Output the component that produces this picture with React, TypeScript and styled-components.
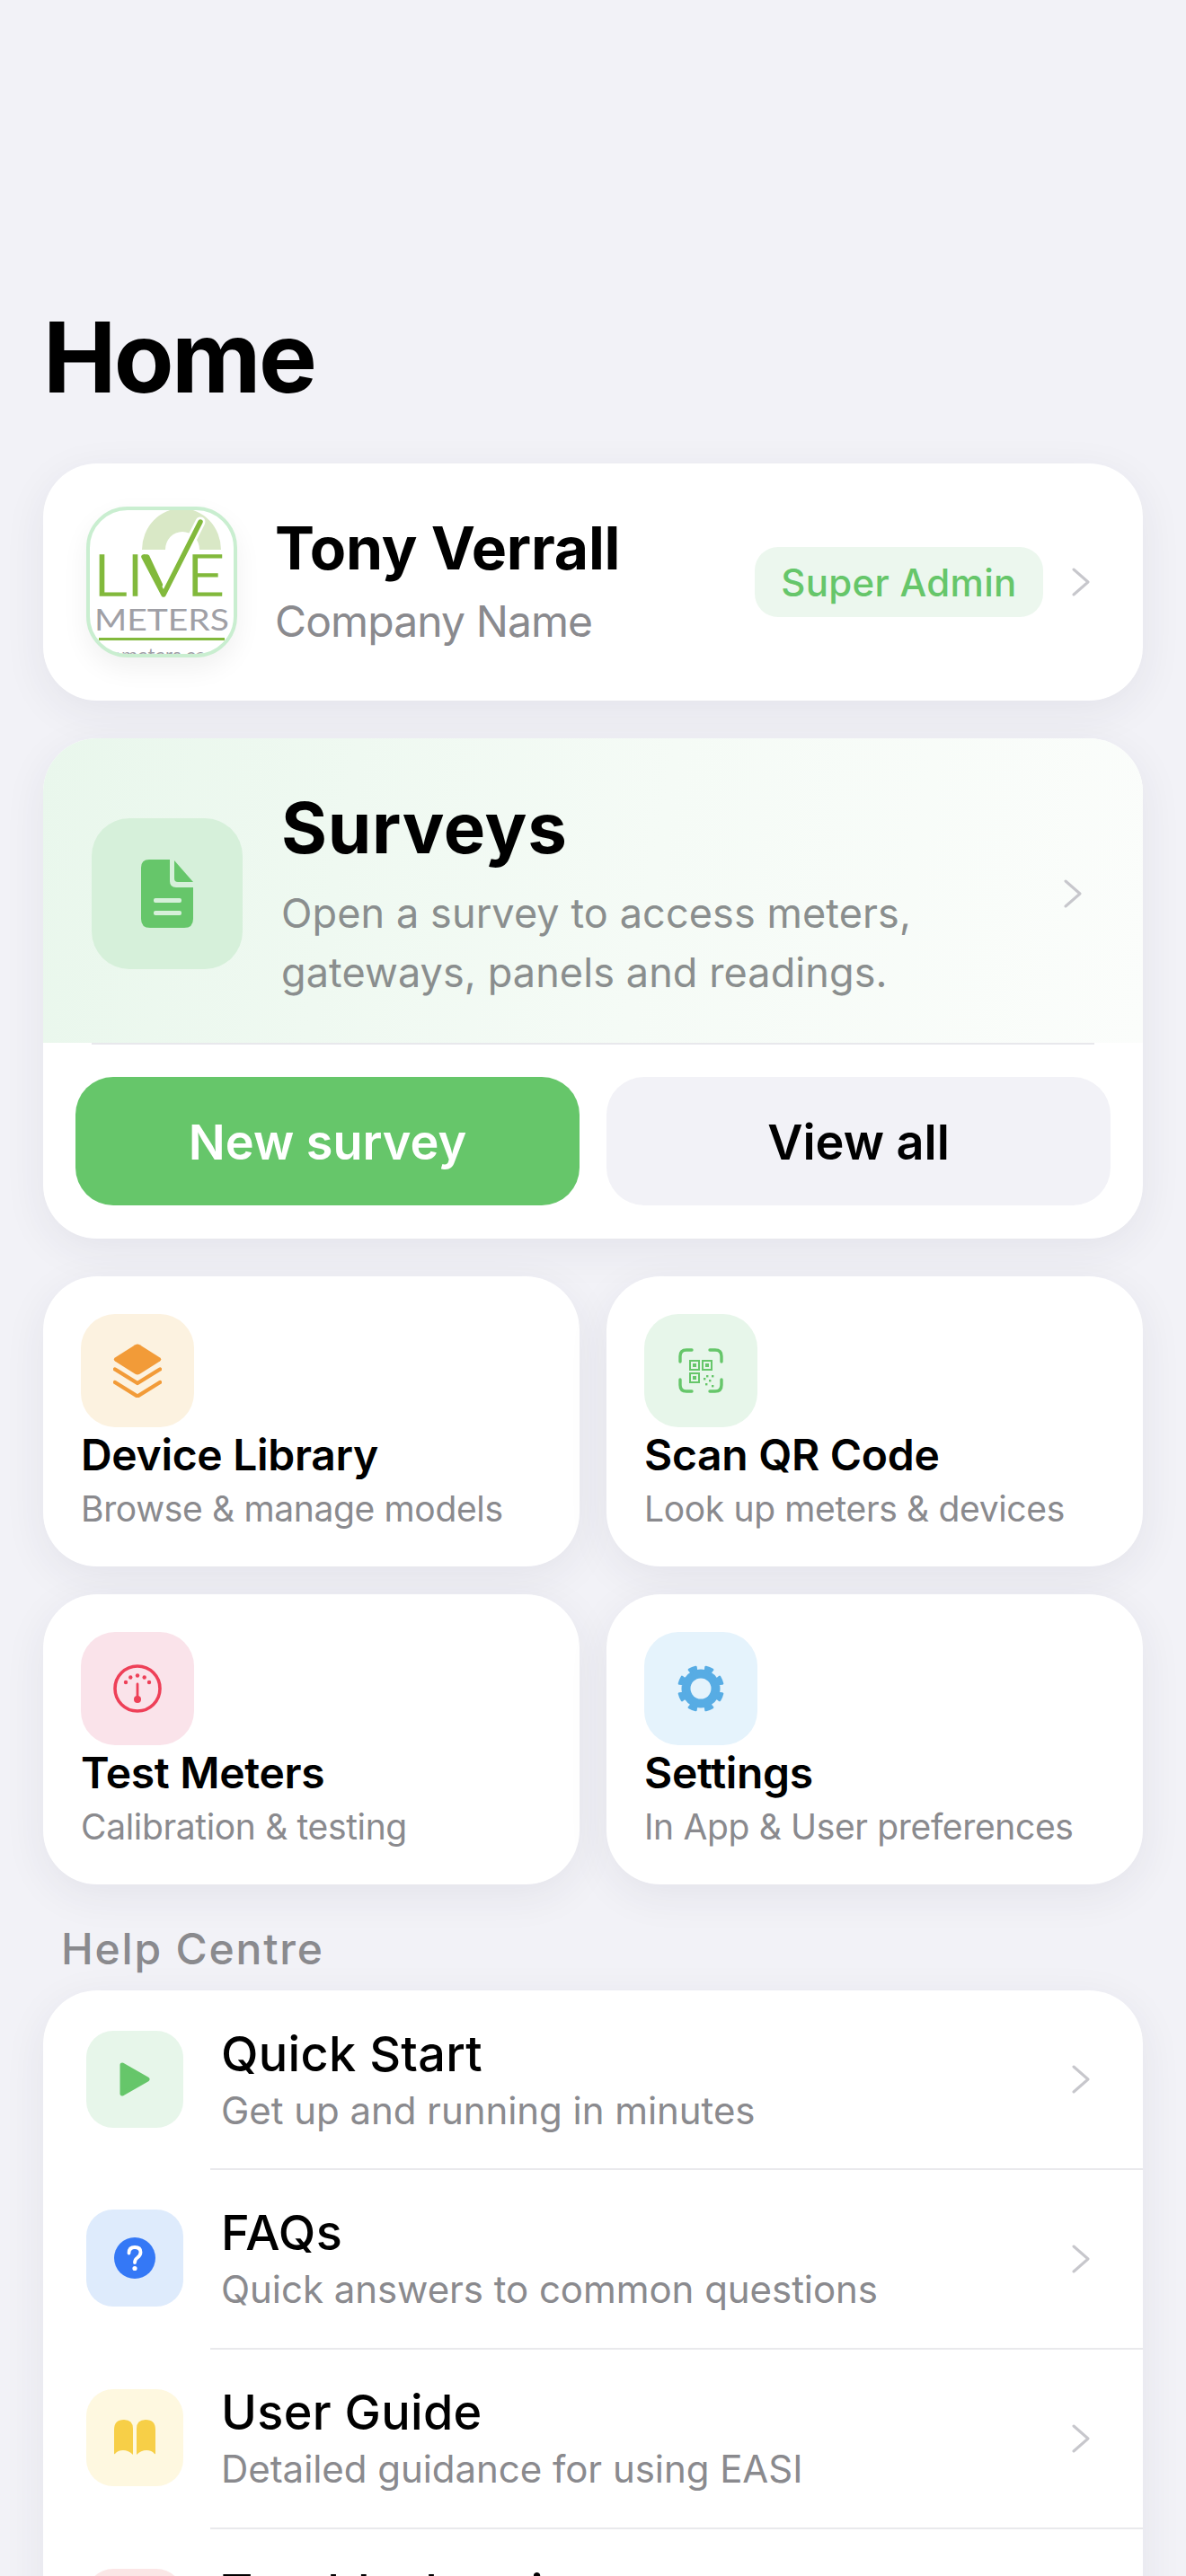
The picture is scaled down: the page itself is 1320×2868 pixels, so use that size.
import React from "react";
import styled, { createGlobalStyle } from "styled-components";

const GlobalStyle = createGlobalStyle`
  html, body {
    margin: 0;
    height: 2868px;
    overflow: hidden;
    background: #f2f2f7;
    font-family: Inter, "Noto Sans", "Liberation Sans", sans-serif;
    -webkit-font-smoothing: antialiased;
  }
`;

const GREEN = "#66c66a";
const CARD_SHADOW = "0 12px 48px rgba(40, 40, 70, 0.07)";

const Screen = styled.main`
  height: 2868px;
  overflow: hidden;
  box-sizing: border-box;
  padding: 338px 48px 0;
  display: flex;
  flex-direction: column;
`;

const PageTitle = styled.h1`
  margin: 0 0 60px;
  font-size: 109px;
  line-height: 118px;
  font-weight: 700;
  letter-spacing: -2.6px;
  color: #000;
`;

const Card = styled.section`
  background: #fff;
  border-radius: 60px;
  box-shadow: ${CARD_SHADOW};
  overflow: hidden;
  flex-shrink: 0;
`;

const ProfileCard = styled(Card)`
  height: 264px;
  margin-bottom: 42px;
  padding: 0 59px 0 48px;
  display: flex;
  align-items: center;
`;

const LogoFrame = styled.div`
  width: 168px;
  height: 168px;
  flex-shrink: 0;
  margin-right: 42px;
  box-sizing: border-box;
  border: 4px solid #c9eed0;
  border-radius: 46px;
  overflow: hidden;
  background: #fff;
  box-shadow: 0 12px 30px rgba(0, 0, 0, 0.06);
  svg { display: block; margin: -4px; }
`;

const ProfileText = styled.div`
  flex: 1;
  min-width: 0;
`;

const ProfileName = styled.div`
  font-size: 66px;
  line-height: 80px;
  font-weight: 700;
  letter-spacing: -0.2px;
  color: #000;
  margin: -5px 0 13px;
`;

const ProfileCompany = styled.div`
  font-size: 48px;
  line-height: 58px;
  letter-spacing: -0.9px;
  color: #8a8a8e;
`;

const RoleBadge = styled.span`
  width: 321px;
  height: 78px;
  margin-right: 32px;
  flex-shrink: 0;
  display: flex;
  align-items: center;
  justify-content: center;
  border-radius: 26px;
  background: #ecf7ee;
  color: ${GREEN};
  font-size: 42px;
  font-weight: 500;
  letter-spacing: 0.3px;
`;

const Chevron = styled.svg`
  width: 20px;
  height: 32px;
  flex-shrink: 0;
  fill: none;
  stroke: #c7c7cc;
  stroke-width: 3;
  stroke-linecap: round;
  stroke-linejoin: round;
`;

const SurveyCard = styled(Card)`
  height: 557px;
  margin-bottom: 42px;
`;

const SurveyHeader = styled.div`
  height: 339px;
  box-sizing: border-box;
  padding: 6px 68px 0 54px;
  display: flex;
  align-items: center;
  background: linear-gradient(100deg, #e9f7ec 0%, #f5fbf6 55%, #fbfdfb 100%);
`;

const SurveyIconBox = styled.div`
  width: 168px;
  height: 168px;
  margin-right: 43px;
  flex-shrink: 0;
  display: flex;
  align-items: center;
  justify-content: center;
  border-radius: 42px;
  background: #d6f0da;
`;

const SurveyText = styled.div`
  flex: 1;
  padding-top: 2px;
`;

const SurveyTitle = styled.div`
  font-size: 78px;
  line-height: 94px;
  font-weight: 700;
  letter-spacing: 0.7px;
  color: #000;
  margin-bottom: 15px;
`;

const SurveySub = styled.div`
  font-size: 45px;
  line-height: 66px;
  letter-spacing: 0.1px;
  color: #8a8e8e;
`;

const SurveyRule = styled.div`
  height: 2px;
  margin: 0 54px;
  background: #e8e8ec;
`;

const SurveyActions = styled.div`
  padding: 36px 36px 0;
  display: grid;
  grid-template-columns: 1fr 1fr;
  gap: 30px;
`;

const ActionButton = styled.button<{ $primary?: boolean }>`
  height: 143px;
  border: 0;
  border-radius: 42px;
  padding-top: 2px;
  font-family: inherit;
  font-size: 54px;
  font-weight: 600;
  letter-spacing: 0;
  background: ${(p) => (p.$primary ? GREEN : "#f2f2f7")};
  color: ${(p) => (p.$primary ? "#fff" : "#000")};
`;

const TileGrid = styled.div`
  display: grid;
  grid-template-columns: 597px 597px;
  column-gap: 30px;
  row-gap: 31px;
  flex-shrink: 0;
`;

const Tile = styled(Card)`
  height: 323px;
  box-sizing: border-box;
  padding: 42px 42px 0;
`;

const IconBox = styled.div<{ $tint: string; $size: number; $radius: number }>`
  width: ${(p) => p.$size}px;
  height: ${(p) => p.$size}px;
  flex-shrink: 0;
  display: flex;
  align-items: center;
  justify-content: center;
  border-radius: ${(p) => p.$radius}px;
  background: ${(p) => p.$tint};
`;

const TileTitle = styled.div`
  margin-top: 2px;
  font-size: 48px;
  line-height: 58px;
  font-weight: 600;
  letter-spacing: -0.3px;
  color: #000;
`;

const TileSub = styled.div`
  margin-top: 7px;
  font-size: 39px;
  line-height: 48px;
  letter-spacing: -0.35px;
  color: #8a8a8e;
`;

const SectionLabel = styled.h2`
  margin: 43px 0 17px;
  padding-left: 20px;
  font-size: 48px;
  line-height: 58px;
  font-weight: 500;
  letter-spacing: 1.8px;
  color: #8a8a8e;
`;

const HelpCard = styled(Card)`
  flex-shrink: 0;
`;

const HelpRow = styled.div`
  position: relative;
  height: 198px;
  box-sizing: border-box;
  padding: 45px 59px 0 48px;
  display: flex;
  align-items: flex-start;
  & + & { border-top: 2px solid #e9e9ec; height: 200px; padding-top: 44px; }
  & + &::before { content: ""; position: absolute; left: 0; top: -2px; width: 186px; height: 2px; background: #fff; }
`;

const HelpText = styled.div`
  flex: 1;
  margin-left: 42px;
  margin-top: -6px;
`;

const HelpTitle = styled.div`
  font-size: 54px;
  line-height: 64px;
  font-weight: 500;
  letter-spacing: 0.3px;
  color: #000;
`;

const HelpSub = styled.div`
  margin-top: 6px;
  font-size: 42px;
  line-height: 50px;
  letter-spacing: -0.05px;
  color: #8a8a8e;
`;

const RowChevron = styled(Chevron)`
  align-self: center;
  margin-top: -45px;
`;

function ChevronIcon({ as: Comp = Chevron }: { as?: typeof Chevron }) {
  return (
    <Comp viewBox="0 0 20 32">
      <path d="M2 2 L18 16 L2 30" />
    </Comp>
  );
}

function LiveMetersLogo() {
  return (
    <svg width="168" height="168" viewBox="0 0 168 168">
      <path d="M62 48 A44 46 0 0 1 150 48 H126 A19 20 0 0 0 88 48 Z" fill="#d9e8c6" />
      <text x="8" y="99" fontFamily="Lato, sans-serif" fontWeight="300" fontSize="63" textLength="146" lengthAdjust="spacingAndGlyphs" fill="#82b93c" stroke="#82b93c" strokeWidth="1.6">LIVE</text>
      <path d="M86 98 L127 17" fill="none" stroke="#fff" strokeWidth="11" strokeLinecap="round" />
      <path d="M64 56 L86 98 L127 17" fill="none" stroke="#82b93c" strokeWidth="5.5" strokeLinecap="round" strokeLinejoin="round" />
      <text x="9" y="138" fontFamily="Lato, sans-serif" fontWeight="400" fontSize="33" textLength="150" lengthAdjust="spacingAndGlyphs" fill="#a0a0a6">METERS</text>
      <rect x="14" y="146" width="140" height="3" fill="#82b93c" />
      <text x="84" y="173" textAnchor="middle" fontFamily="Lato, sans-serif" fontSize="22" fill="#a0a0a6">livemeters.co.uk</text>
    </svg>
  );
}

function DocIcon() {
  return (
    <svg width="58" height="76" viewBox="0 0 58 76">
      <path d="M9 0 H32 V24 Q32 31 39 31 H58 V66 Q58 76 48 76 H10 Q0 76 0 66 V9 Q0 0 9 0 Z" fill={GREEN} />
      <path d="M37 1 L58 25 H41 Q37 25 37 21 Z" fill={GREEN} />
      <rect x="14" y="43" width="31" height="5" rx="2" fill="#d6f0da" />
      <rect x="14" y="57" width="31" height="5" rx="2" fill="#d6f0da" />
    </svg>
  );
}

function LayersIcon() {
  return (
    <svg width="54" height="60" viewBox="0 0 54 60">
      <path d="M24.5 1.2 Q27 -0.2 29.5 1.2 L52 15.5 Q54.5 17.5 52 19.5 L29.5 33.8 Q27 35.2 24.5 33.8 L2 19.5 Q-0.5 17.5 2 15.5 Z" fill="#f29b38" />
      <path d="M2 34.500 L27 50 L52 34.500" transform="translate(0 -6)" fill="none" stroke="#f29b38" strokeWidth="4.4" strokeLinecap="round" strokeLinejoin="round" />
      <path d="M2 49 L27 64.500 L52 49" transform="translate(0 -6)" fill="none" stroke="#f29b38" strokeWidth="4.4" strokeLinecap="round" strokeLinejoin="round" />
    </svg>
  );
}

function QrIcon() {
  const finder = (x: number, y: number) => (
    <g key={`${x}-${y}`}>
      <rect x={x + 1} y={y + 1} width="10" height="10" fill="none" stroke={GREEN} strokeWidth="2" />
      <rect x={x + 4} y={y + 4} width="4" height="4" fill={GREEN} />
    </g>
  );
  const dots = [[31, 30], [37, 30], [28, 33], [34, 35], [30, 39], [37, 41]];
  return (
    <svg width="50" height="50" viewBox="0 0 50 50">
      <path d="M2 15 V9 Q2 2 9 2 H15 M35 2 H41 Q48 2 48 9 V15 M48 35 V41 Q48 48 41 48 H35 M15 48 H9 Q2 48 2 41 V35" fill="none" stroke={GREEN} strokeWidth="3.4" strokeLinecap="round" />
      {finder(12, 13)}
      {finder(26, 13)}
      {finder(12, 27)}
      {dots.map(([x, y]) => (
        <rect key={`${x}-${y}`} x={x} y={y} width="2.400" height="2.400" fill={GREEN} />
      ))}
    </svg>
  );
}

function GaugeIcon() {
  const red = "#ee4058";
  return (
    <svg width="54" height="54" viewBox="0 0 54 54">
      <circle cx="27" cy="27" r="25" fill="none" stroke={red} strokeWidth="3.6" />
      <circle cx="14" cy="20" r="2.200" fill={red} />
      <circle cx="19.300" cy="14.500" r="2.200" fill={red} />
      <circle cx="27" cy="12.500" r="2.200" fill={red} />
      <circle cx="34.700" cy="14.500" r="2.200" fill={red} />
      <circle cx="40" cy="20" r="2.200" fill={red} />
      <path d="M27 22 V38" stroke={red} strokeWidth="2.800" strokeLinecap="round" />
      <circle cx="27" cy="39" r="4" fill={red} />
    </svg>
  );
}

function gearPath(cx: number, cy: number, outer: number, inner: number, teeth: number) {
  const step = (Math.PI * 2) / teeth;
  const pt = (r: number, a: number) => `${(cx + r * Math.cos(a)).toFixed(2)} ${(cy + r * Math.sin(a)).toFixed(2)}`;
  let d = "";
  for (let i = 0; i < teeth; i++) {
    const a = i * step - step / 2;
    d += `${i === 0 ? "M" : "L"}${pt(inner, a - step * 0.16)} `;
    d += `L${pt(outer, a - step * 0.2)} A${outer} ${outer} 0 0 1 ${pt(outer, a + step * 0.2)} `;
    d += `L${pt(inner, a + step * 0.16)} `;
    d += `A${inner} ${inner} 0 0 1 ${pt(inner, a + step - step * 0.16)} `;
  }
  return d + "Z";
}

function GearIcon() {
  const blue = "#57ace4";
  return (
    <svg width="54" height="54" viewBox="0 0 54 54">
      <path d={gearPath(27, 27, 24.500, 20, 8)} fill={blue} stroke={blue} strokeWidth="3" strokeLinejoin="round" />
      <circle cx="27" cy="27" r="11.500" fill="#e5f3fc" />
    </svg>
  );
}

function PlayIcon() {
  return (
    <svg width="34" height="38" viewBox="0 0 34 38">
      <path d="M3 3 L31 19 L3 35 Z" fill={GREEN} stroke={GREEN} strokeWidth="5" strokeLinejoin="round" />
    </svg>
  );
}

function QuestionIcon() {
  return (
    <svg width="46" height="46" viewBox="0 0 46 46">
      <circle cx="23" cy="23" r="23" fill="#3478f6" />
      <path d="M16.500 17.500 Q16.500 11 23 11 Q29.500 11 29.500 16.500 Q29.500 20 26 22.500 Q23 24.500 23 28" fill="none" stroke="#fff" strokeWidth="3.800" strokeLinecap="round" />
      <circle cx="23" cy="34.500" r="2.600" fill="#fff" />
    </svg>
  );
}

function BookIcon() {
  const yellow = "#f7cf47";
  return (
    <svg width="46" height="40" viewBox="0 0 46 40">
      <path d="M0 11 Q0 0 11 0 Q21 0 21 10 V39 Q16 34 10 34 Q4 34 1 38 Q0 39 0 37 Z" fill={yellow} />
      <path d="M46 11 Q46 0 35 0 Q25 0 25 10 V39 Q30 34 36 34 Q42 34 45 38 Q46 39 46 37 Z" fill={yellow} />
    </svg>
  );
}

const tiles = [
  { title: "Device Library", sub: "Browse & manage models", tint: "#fcf2e0", icon: <LayersIcon /> },
  { title: "Scan QR Code", sub: "Look up meters & devices", tint: "#e7f6ea", icon: <QrIcon /> },
  { title: "Test Meters", sub: "Calibration & testing", tint: "#fae3ea", icon: <GaugeIcon /> },
  { title: "Settings", sub: "In App & User preferences", tint: "#e5f3fc", icon: <GearIcon /> },
];

const helpRows = [
  { title: "Quick Start", sub: "Get up and running in minutes", tint: "#e7f6ea", icon: <PlayIcon /> },
  { title: "FAQs", sub: "Quick answers to common questions", tint: "#deebfc", icon: <QuestionIcon /> },
  { title: "User Guide", sub: "Detailed guidance for using EASI", tint: "#fef8e0", icon: <BookIcon /> },
  { title: "Troubleshooting", tint: "#fbe6e6", icon: null },
];

export default function App() {
  return (
    <>
      <GlobalStyle />
      <Screen>
        <PageTitle>Home</PageTitle>

        <ProfileCard>
          <LogoFrame>
            <LiveMetersLogo />
          </LogoFrame>
          <ProfileText>
            <ProfileName>Tony Verrall</ProfileName>
            <ProfileCompany>Company Name</ProfileCompany>
          </ProfileText>
          <RoleBadge>Super Admin</RoleBadge>
          <ChevronIcon />
        </ProfileCard>

        <SurveyCard>
          <SurveyHeader>
            <SurveyIconBox>
              <DocIcon />
            </SurveyIconBox>
            <SurveyText>
              <SurveyTitle>Surveys</SurveyTitle>
              <SurveySub>
                Open a survey to access meters,
                <br />
                gateways, panels and readings.
              </SurveySub>
            </SurveyText>
            <ChevronIcon />
          </SurveyHeader>
          <SurveyRule />
          <SurveyActions>
            <ActionButton $primary>New survey</ActionButton>
            <ActionButton>View all</ActionButton>
          </SurveyActions>
        </SurveyCard>

        <TileGrid>
          {tiles.map((t) => (
            <Tile key={t.title}>
              <IconBox $tint={t.tint} $size={126} $radius={38}>
                {t.icon}
              </IconBox>
              <TileTitle>{t.title}</TileTitle>
              <TileSub>{t.sub}</TileSub>
            </Tile>
          ))}
        </TileGrid>

        <SectionLabel>Help Centre</SectionLabel>

        <HelpCard>
          {helpRows.map((r) => (
            <HelpRow key={r.title}>
              <IconBox $tint={r.tint} $size={108} $radius={30}>
                {r.icon}
              </IconBox>
              <HelpText>
                <HelpTitle>{r.title}</HelpTitle>
                {r.sub && <HelpSub>{r.sub}</HelpSub>}
              </HelpText>
              <ChevronIcon as={RowChevron} />
            </HelpRow>
          ))}
        </HelpCard>
      </Screen>
    </>
  );
}
